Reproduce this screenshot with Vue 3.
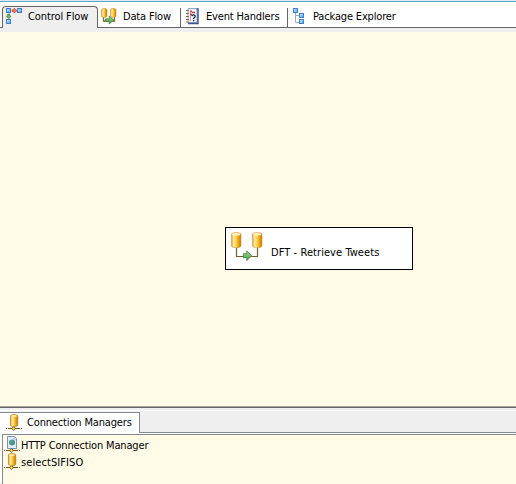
<script setup>
const tabs = [
  { id: 'control', label: 'Control Flow' },
  { id: 'data', label: 'Data Flow' },
  { id: 'event', label: 'Event Handlers' },
  { id: 'package', label: 'Package Explorer' },
]
</script>

<template>
  <svg class="defs" width="0" height="0">
    <defs>
      <linearGradient id="gold" x1="0" x2="1" y1="0" y2="0">
        <stop offset="0" stop-color="#d9a238" />
        <stop offset=".25" stop-color="#ffeaa0" />
        <stop offset=".5" stop-color="#fbd055" />
        <stop offset=".72" stop-color="#f0a800" />
        <stop offset="1" stop-color="#b87a10" />
      </linearGradient>
      <linearGradient id="blue" x1="0" x2="1" y1="0" y2="1">
        <stop offset="0" stop-color="#d5eeff" />
        <stop offset="1" stop-color="#4a9cf0" />
      </linearGradient>
      <linearGradient id="green" x1="0" x2="0" y1="0" y2="1">
        <stop offset="0" stop-color="#b4e09a" />
        <stop offset="1" stop-color="#359744" />
      </linearGradient>
      <symbol id="connector" viewBox="0 0 16 17">
        <path d="M8 12v3M2 14.5h12" stroke="#7a4f18" />
        <path d="M0 14.5h1M15 14.5h1" stroke="#7a4f18" />
        <path d="M7.500 12.700l2 1.800-2 1.800-2-1.800z" fill="#ffdc32" stroke="#6b4311" stroke-width=".8" />
        <path d="M4.400 2Q4.400.6 8 .6t3.800 1.400v9q0 1.600-3.800 1.600T4.400 11z" fill="url(#gold)" stroke="#b97a1a" stroke-width=".7" />
        <ellipse cx="8" cy="2" rx="3" ry="1" fill="#ffeaa8" />
      </symbol>
    </defs>
  </svg>
  <div class="designer">
    <nav class="tabs">
      <div v-for="tab in tabs" :key="tab.id" class="tab" :class="tab.id">
        <svg v-if="tab.id === 'control'" class="icon" width="17" height="17" viewBox="0 0 17 17">
          <g fill="url(#blue)" stroke="#3f80cc">
            <rect x=".5" y=".5" width="4" height="4" />
            <rect x="11.500" y=".5" width="4" height="4" />
            <rect x=".5" y="11.500" width="4" height="4" />
          </g>
          <path d="M6 1.800h2V.2l3.200 2.500L8 5V3.500H6z" fill="#f08058" stroke="#c8462c" stroke-width=".7" />
          <path d="M1.800 6h1.800v2H5L2.700 10.800.4 8h1.400z" fill="#79bb62" stroke="#39873b" stroke-width=".7" />
        </svg>
        <svg v-else-if="tab.id === 'data'" class="icon" width="17" height="17" viewBox="0 0 17 17">
          <path d="M2.500 9v4H8M13.500 9v4H11" fill="none" stroke="#86682a" stroke-width="1.300" />
          <path d="M.4 1.700Q.4.5 3.200.5T6 1.700V8q0 1.400-2.800 1.400T.4 8z" fill="url(#gold)" stroke="#c79238" stroke-width=".6" />
          <path d="M9.400 1.700Q9.400.5 12.200.5T15 1.700V8q0 1.400-2.800 1.400T9.400 8z" fill="url(#gold)" stroke="#c79238" stroke-width=".6" />
          <path d="M4.600 10.800h3.600V8l4.600 4-4.600 4v-2.600H4.600z" fill="url(#green)" stroke="#347a32" stroke-width=".7" />
        </svg>
        <svg v-else-if="tab.id === 'event'" class="icon" width="14" height="17" viewBox="0 0 14 17">
          <path d="M2 .5h9v14H2z" fill="#eef3fb" stroke="#93a9cc" />
          <path d="M10.500 1H12v14.500H2" fill="none" stroke="#3d588c" stroke-width="1.500" />
          <path d="M4.500 2v11" stroke="#d5a3a3" />
          <path d="M4 3.500h2M4 6.500h2M6 4.500h3" stroke="#cf3d35" stroke-width="1.300" />
          <path d="M0 2.500h3M0 5.500h3M0 8.500h3M0 11.500h3M0 14h3" stroke="#8a6b3d" />
          <path d="M5.800 8.200Q6 6.800 7.500 6.800t1.700 1.400q0 1-1.600 2v.8M7.600 12v1.300" fill="none" stroke="#20283c" stroke-width="1.300" />
        </svg>
        <svg v-else class="icon" width="13" height="17" viewBox="0 0 13 17">
          <path d="M2.500 5v9.500H6M2.500 7.500H6" fill="none" stroke="#a4a8b8" />
          <g fill="url(#blue)" stroke="#3f80cc">
            <rect x=".5" y=".5" width="4" height="4" />
            <rect x="6.500" y="5.500" width="4" height="4" />
            <rect x="6.500" y="11.500" width="4" height="4" />
          </g>
        </svg>
        <span class="label">{{ tab.label }}</span>
      </div>
    </nav>

    <main class="canvas">
      <div class="task">
        <svg class="task-icon" width="34" height="32" viewBox="0 0 34 32">
          <path d="M6.500 15v9.500H14M27.500 15v9.500H20" fill="none" stroke="#7c5c28" stroke-width="1.200" />
          <path d="M1.400 2.200Q1.400.5 6.200.5T11 2.200v11.500q0 2-4.800 2t-4.800-2z" fill="url(#gold)" stroke="#d0a050" stroke-width=".6" />
          <ellipse cx="6.200" cy="2.300" rx="4.300" ry="1.400" fill="#fff0bd" />
          <path d="M22.400 2.200q0-1.700 4.800-1.700T32 2.200v11.500q0 2-4.800 2t-4.800-2z" fill="url(#gold)" stroke="#d0a050" stroke-width=".6" />
          <ellipse cx="27.200" cy="2.300" rx="4.300" ry="1.400" fill="#fff0bd" />
          <path d="M13.400 21.700h3.400v-2.900l4.800 5-4.800 4.800v-2.900h-3.400z" fill="url(#green)" stroke="#39813b" stroke-width=".8" />
        </svg>
        <span class="label">DFT - Retrieve Tweets</span>
      </div>
    </main>

    <section class="managers">
      <div class="manager-head">
        <div class="manager-tab">
          <svg class="icon" width="16" height="17"><use href="#connector" /></svg>
          <span class="label">Connection Managers</span>
        </div>
      </div>
      <div class="list">
        <div class="row http">
          <svg width="16" height="17" viewBox="0 0 16 17">
            <path d="M2 14.500h12M0 14.500h1M15 14.500h1M8 12v3" stroke="#7a4f18" />
            <path d="M3.500.5h7l2 2v10h-9z" fill="#e4effc" stroke="#7f8fc0" />
            <path d="M10 .5V3h2.500" fill="#fff" stroke="#8299c2" stroke-width=".7" />
            <circle cx="8" cy="6.500" r="3" fill="#4388c5" />
            <path d="M5.500 6l2-2 2 .5-1 2-1.500.5.500 2-1.500-.5zM9 7l2-.5-.7 2.300L9 9z" fill="#5bab58" />
            <path d="M7.500 12.700l2 1.800-2 1.800-2-1.800z" fill="#ffdc32" stroke="#6b4311" stroke-width=".8" />
          </svg>
          <span class="label">HTTP Connection Manager</span>
        </div>
        <div class="row sql">
          <svg width="16" height="17"><use href="#connector" /></svg>
          <span class="label">selectSIFISO</span>
        </div>
      </div>
    </section>
  </div>
</template>

<style>
body { margin: 0; overflow: hidden; }
</style>
<style scoped>
.defs { display: block; }
.designer { box-sizing: border-box; width: 516px; height: 484px; display: flex; flex-direction: column; background: #efefef; color: #000; font: 11px/16px "DejaVu Sans Condensed", "DejaVu Sans", sans-serif; font-stretch: condensed; overflow: hidden; }
svg { display: block; flex: none; }
.label { white-space: nowrap; letter-spacing: -.16px; }
.tabs { box-sizing: border-box; height: 28px; flex: none; display: flex; align-items: flex-end; padding-left: 2px; background: linear-gradient(#d6eafb 0 1px, #68a1bb 1px 2px, #fff 2px); border-bottom: 1px solid #656565; }
.tab { box-sizing: border-box; height: 19px; display: flex; border-right: 1px solid #656565; }
.tab .label { line-height: 18px; }
.control { height: 22px; width: 96px; margin-bottom: -1px; padding: 1px 0 0 3px; border: 1px solid #656565; border-bottom: 0; border-radius: 4px 4px 0 0; background: #efefef; gap: 5px; }
.control .label { line-height: 17px; letter-spacing: -.1px; }
.data { width: 83px; padding-left: 3px; gap: 5px; }
.event { width: 107px; padding-left: 5px; gap: 6px; }
.package { border: 0; padding-left: 5px; gap: 7px; }
.canvas { box-sizing: border-box; margin-top: 4px; height: 376px; flex: none; padding: 195px 0 0 225px; background: #fffbe7; border-bottom: 1px solid #656565; box-shadow: inset 0 -1px #a5a5a0; }
.task { box-sizing: border-box; width: 188px; height: 43px; display: flex; gap: 7px; padding: 4px 0 0 4px; border: 1px solid #000; background: #fff; }
.task .label { margin-top: 13px; letter-spacing: .07px; }
.managers { flex: 1; display: flex; flex-direction: column; padding-top: 2px; }
.manager-head { height: 23px; flex: none; display: flex; box-sizing: border-box; border-top: 1px solid #fff; background: linear-gradient(#efefef 0 21px, #858990 21px); }
.manager-tab { box-sizing: border-box; width: 140px; height: 22px; margin-top: 1px; display: flex; gap: 5px; padding: 1px 0 0 6px; background: #fff; border: 1px solid #858990; border-left: 0; border-bottom: 0; }
.manager-tab .label { line-height: 17px; }
.list { flex: 1; margin-top: 1px; box-shadow: -2px -1px #fff; margin-left: 2px; border-left: 1px solid #858990; border-top: 1px solid #858990; background: #fffbe7; padding: 1px 0 0 1px; }
.row { display: flex; gap: 1px; height: 17px; }
.row .label { line-height: 20px; }
.sql .label { letter-spacing: .08px; }
</style>
